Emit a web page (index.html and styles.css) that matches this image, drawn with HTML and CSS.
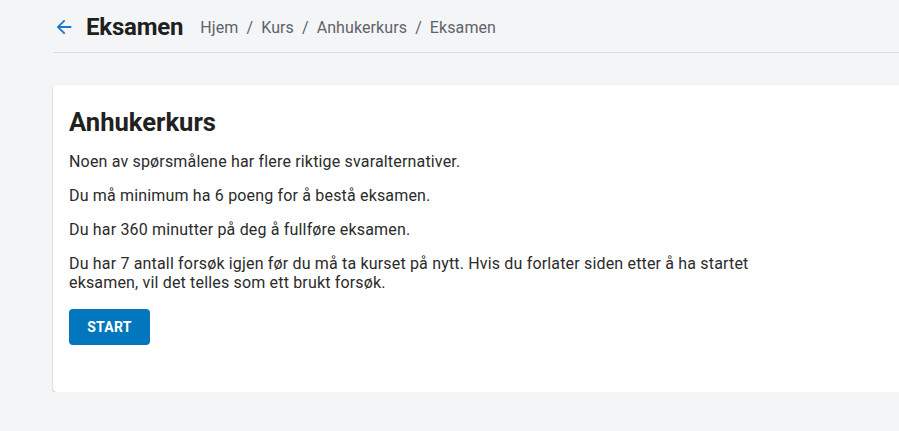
FILE: index.html
```html
<!DOCTYPE html>
<html lang="no">
<head>
<meta charset="utf-8">
<title>Eksamen</title>
<link rel="stylesheet" href="styles.css">
</head>
<body>
<div class="page">
  <header class="topbar">
    <a class="back" href="#" aria-label="Tilbake">
      <svg width="22" height="22" viewBox="0 0 24 24"><path d="M20 11H7.83l5.59-5.59L12 4l-8 8 8 8 1.41-1.41L7.83 13H20v-2z" fill="#1976d2"/></svg>
    </a>
    <h1 class="title">Eksamen</h1>
    <nav class="crumbs">
      <span>Hjem</span><span class="sep">/</span><span>Kurs</span><span class="sep">/</span><span>Anhukerkurs</span><span class="sep">/</span><span>Eksamen</span>
    </nav>
  </header>
  <section class="card">
    <h2 class="card-title">Anhukerkurs</h2>
    <p>Noen av spørsmålene har flere riktige svaralternativer.</p>
    <p>Du må minimum ha 6 poeng for å bestå eksamen.</p>
    <p>Du har 360 minutter på deg å fullføre eksamen.</p>
    <p class="wide">Du har 7 antall forsøk igjen før du må ta kurset på nytt. Hvis du forlater siden etter å ha startet eksamen, vil det telles som ett brukt forsøk.</p>
    <button class="btn">START</button>
  </section>
</div>
</body>
</html>
```
FILE: styles.css
```css
html, body {
  margin: 0;
  padding: 0;
  background: #f4f5f7;
  overflow: hidden;
  font-family: Roboto, "Liberation Sans", sans-serif;
  color: #212121;
}
.page {
  width: 880px;
  padding-left: 53px;
}
.topbar {
  display: flex;
  align-items: center;
  height: 53px;
  padding-top: 2px;
  border-bottom: 1px solid #dcdde0;
  box-sizing: border-box;
}
.back {
  display: flex;
  align-items: center;
  margin-left: 0;
  margin-right: 11px;
}
.title {
  margin: 0;
  font-size: 24px;
  font-weight: 700;
  color: #1f1f1f;
  letter-spacing: -0.2px;
}
.crumbs {
  margin-left: 17px;
  font-size: 16px;
  letter-spacing: 0.1px;
  color: #5f6368;
  display: flex;
}
.crumbs .sep {
  margin: 0 8px;
}
.card {
  margin-top: 32px;
  background: #fff;
  border-radius: 4px;
  box-shadow: 0 1px 2px rgba(0,0,0,0.25);
  padding: 22px 16px 0;
  height: 307px;
  box-sizing: border-box;
}
.card-title {
  margin: 0 0 15px;
  font-size: 25.6px;
  font-weight: 700;
  color: #212121;
  line-height: 30px;
}
.card p {
  margin: 0 0 15px;
  font-size: 16px;
  line-height: 19px;
  letter-spacing: 0.17px;
  color: #2b2b2b;
}
.card p.wide {
  max-width: 716px;
}
.btn {
  margin-top: 2px;
  background: #0277bd;
  color: #fff;
  border: none;
  border-radius: 4px;
  width: 81px;
  height: 36px;
  font-family: Roboto, sans-serif;
  font-weight: 700;
  font-size: 14px;
  letter-spacing: 0.3px;
}
```
